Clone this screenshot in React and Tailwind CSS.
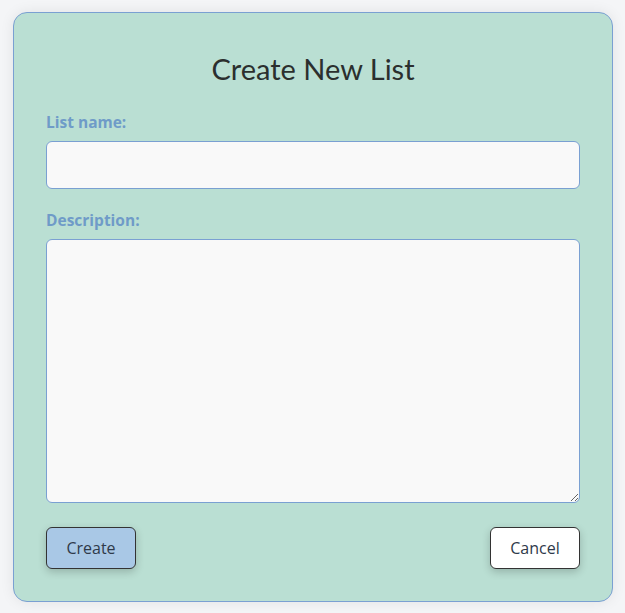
export default function App() {
  return (
    <div className="min-h-screen bg-[#f4f5f7] p-[12px_12px_11px_13px]">
      <div className="w-[600px] h-[590px] rounded-[14px] border border-[#7aa0d2] bg-[#badfd3] px-[32px] pt-[37px] shadow-[0_0_14px_rgba(0,0,0,0.08)] font-['Open_Sans',sans-serif]">
        {/* Title */}
        <h2 className="text-center text-[29px] leading-[38px] text-[#2b2f2e] font-['Lato',sans-serif]">
          Create New List
        </h2>

        {/* List name */}
        <label className="block mt-[24px] mb-[9px] text-[15.5px] leading-[20px] font-bold text-[#6f9bc8]">
          List name:
        </label>
        <input
          type="text"
          className="block w-full h-[48px] rounded-[6px] border border-[#7aa0d2] bg-[#f9f9f9] px-3 outline-none"
        />

        {/* Description */}
        <label className="block mt-[21px] mb-[9px] text-[15.5px] leading-[20px] font-bold text-[#6f9bc8]">
          Description:
        </label>
        <textarea className="block w-full h-[264px] rounded-[6px] border border-[#7aa0d2] bg-[#f9f9f9] px-3 py-2 outline-none" />

        {/* Actions */}
        <div className="mt-[24px] flex justify-between">
          <button className="w-[90px] h-[42px] rounded-[6px] border border-[#333] bg-[#a9c8e6] text-[16px] text-[#2f3a4a] shadow-[0_3px_8px_rgba(0,0,0,0.2)]">
            Create
          </button>
          <button className="w-[90px] h-[42px] rounded-[6px] border border-[#333] bg-white text-[16px] text-[#2f3a4a] shadow-[0_3px_8px_rgba(0,0,0,0.2)]">
            Cancel
          </button>
        </div>
      </div>
    </div>
  );
}
